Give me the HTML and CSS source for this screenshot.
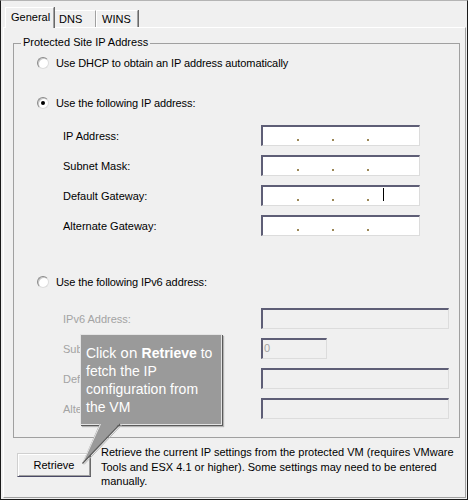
FILE: index.html
```html
<!DOCTYPE html>
<html>
<head>
<meta charset="utf-8">
<link rel="stylesheet" href="styles.css">
</head>
<body>
<div class="window">
  <div class="tabs">
    <div class="tab active">General</div>
    <div class="tab">DNS</div>
    <div class="tab wins">WINS</div>
  </div>
  <div class="panel">
    <div class="group">
      <span class="group-title">Protected Site IP Address</span>
      <div class="radio-row"><span class="radio"></span><span>Use DHCP to obtain an IP address automatically</span></div>
      <div class="radio-row r2"><span class="radio checked"></span><span>Use the following IP address:</span></div>
      <div class="fields v4">
        <span class="flabel">IP Address:</span>
        <div class="ipbox"><span class="dot first"></span><span class="dot"></span><span class="dot"></span></div>
        <span class="flabel">Subnet Mask:</span>
        <div class="ipbox"><span class="dot first"></span><span class="dot"></span><span class="dot"></span></div>
        <span class="flabel">Default Gateway:</span>
        <div class="ipbox"><span class="dot first"></span><span class="dot"></span><span class="dot"></span><span class="caret"></span></div>
        <span class="flabel">Alternate Gateway:</span>
        <div class="ipbox"><span class="dot first"></span><span class="dot"></span><span class="dot"></span></div>
      </div>
      <div class="radio-row r3"><span class="radio"></span><span>Use the following IPv6 address:</span></div>
      <div class="fields v6">
        <span class="flabel dis">IPv6 Address:</span>
        <div class="tbox wide"></div>
        <span class="flabel dis">Subnet Prefix Length:</span>
        <div class="tbox short">0</div>
        <span class="flabel dis">Default Gateway:</span>
        <div class="tbox wide"></div>
        <span class="flabel dis">Alternate Gateway:</span>
        <div class="tbox wide"></div>
      </div>
    </div>
    <div class="bottom">
      <button class="btn">Retrieve</button>
      <p class="desc">Retrieve the current IP settings from the protected VM (requires VMware<br>Tools and ESX 4.1 or higher). Some settings may need to be entered<br>manually.</p>
    </div>
  </div>
  <div class="callout">Click <span class="on">on</span> <b>Retrieve</b> to<br>fetch the IP<br>configuration from<br>the VM</div>
  <svg class="tail" width="50" height="50" viewBox="0 0 50 50">
    <polygon points="22,3 42,3 4,44" fill="#9a9a9a"/>
    <line x1="22.5" y1="4" x2="4.5" y2="43.5" stroke="#e4e4e4" stroke-width="1"/>
    <line x1="42" y1="4" x2="4.5" y2="43.5" stroke="#5a5a5a" stroke-width="1.2"/>
    <line x1="44" y1="4.5" x2="6" y2="44.5" stroke="#b8b8b8" stroke-width="1"/>
  </svg>
</div>
</body>
</html>
```
FILE: styles.css
```css
body {
  margin: 0;
  background: #f0f0f0;
  font-family: "Liberation Sans", Arial, sans-serif;
  font-size: 11px;
  color: #000;
}

.window {
  position: relative;
  width: 468px;
  height: 500px;
  box-sizing: border-box;
  border: 1px solid #1a1a1a;
  border-top-color: #b4b4b4;
  background: #f0f0f0;
  display: flex;
  flex-direction: column;
}

.tabs {
  display: flex;
  align-items: flex-end;
  height: 26px;
  padding-left: 4px;
}

.tab {
  box-sizing: border-box;
  width: 42px;
  height: 17px;
  padding: 2px 0 0 4px;
  line-height: 12px;
  border-top: 1px solid #fff;
  border-left: 1px solid #fff;
  border-right: 1px solid #a0a0a0;
  box-shadow: 1px 0 0 #696969;
}

.tab.wins {
  padding-left: 5px;
}

.tab.active {
  position: relative;
  z-index: 1;
  width: 49px;
  height: 21px;
  margin-bottom: -1px;
  padding: 3px 0 0 5px;
  background: #f0f0f0;
}

.panel {
  flex: 1;
  margin: 0 1px 1px 2px;
  border-top: 1px solid #fff;
  border-left: 1px solid #fff;
  border-right: 1px solid #a0a0a0;
  border-bottom: 1px solid #a0a0a0;
  padding: 15px 5px 0 9px;
}

.group {
  position: relative;
  border: 1px solid #a0a0a0;
  padding: 11px 0 18px 23px;
}

.group-title {
  position: absolute;
  top: -8px;
  left: 7px;
  padding: 0 2px;
  line-height: 13px;
  background: #f0f0f0;
}

.radio-row {
  display: flex;
  align-items: center;
  gap: 7px;
  height: 16px;
  letter-spacing: -0.1px;
}

.radio-row.r2 { margin-top: 24px; }
.radio-row.r3 { margin-top: 38px; }

.radio {
  position: relative;
  box-sizing: border-box;
  width: 12px;
  height: 12px;
  border-radius: 50%;
  border: 1px solid;
  border-color: #8a8a8a #dcdcdc #dcdcdc #8a8a8a;
  background: #fff;
  box-shadow: inset 1px 1px 0 #c8c8c8;
}

.radio.checked::after {
  content: "";
  position: absolute;
  left: 3px;
  top: 3px;
  width: 4px;
  height: 4px;
  border-radius: 50%;
  background: #000;
}

.fields {
  display: grid;
  grid-template-columns: 198px auto;
  row-gap: 9px;
  align-items: center;
  padding-left: 26px;
  justify-items: start;
}

.fields.v4 { margin-top: 14px; }
.fields.v6 { margin-top: 18px; }

.flabel.dis { color: #a3a3a3; }

.ipbox, .tbox {
  box-sizing: border-box;
  height: 21px;
  border-style: solid;
  border-width: 2px 1px 1px 2px;
  border-color: #5e5e76 #dcdcdc #dcdcdc #5e5e76;
}

.ipbox {
  display: flex;
  align-items: flex-start;
  width: 159px;
  background: #fff;
}

.dot {
  width: 2px;
  height: 2px;
  margin: 12px 0 0 33px;
  background: #9c8858;
}

.dot.first { margin-left: 34px; }

.caret {
  width: 1px;
  height: 13px;
  margin: 1px 0 0 14px;
  background: #000;
}

.tbox {
  background: #f0f0f0;
  color: #a3a3a3;
  padding-left: 1px;
  line-height: 17px;
}

.tbox.wide { width: 188px; }
.tbox.short { width: 66px; }

.bottom {
  display: flex;
  align-items: flex-start;
  margin-top: 7px;
}

.btn {
  box-sizing: border-box;
  width: 74px;
  height: 24px;
  margin: 8px 0 0 4px;
  padding: 0;
  font: inherit;
  color: #000;
  background: #f0f0f0;
  border: 1px solid;
  border-color: #d0d0d0 #6a6a6a #4a4a66 #d0d0d0;
  box-shadow: inset 1px 1px 0 #fff, inset -1px -1px 0 #a0a0a0;
}

.desc {
  margin: 0 0 0 10px;
  line-height: 14.5px;
  white-space: nowrap;
}

.callout {
  position: absolute;
  left: 79px;
  top: 333px;
  box-sizing: border-box;
  width: 142px;
  height: 91px;
  padding: 9px 0 0 5px;
  background: #9a9a9a;
  border: 1px solid #e4e4e4;
  box-shadow: 1px 1px 0 #5a5a5a, 2px 2px 1px rgba(0, 0, 0, 0.25);
  color: #fff;
  font-size: 14px;
  line-height: 18px;
  white-space: nowrap;
}

.callout .on {
  font-family: "DejaVu Sans", Verdana, sans-serif;
  font-size: 14px;
}

.tail {
  position: absolute;
  left: 77px;
  top: 419px;
}
```
